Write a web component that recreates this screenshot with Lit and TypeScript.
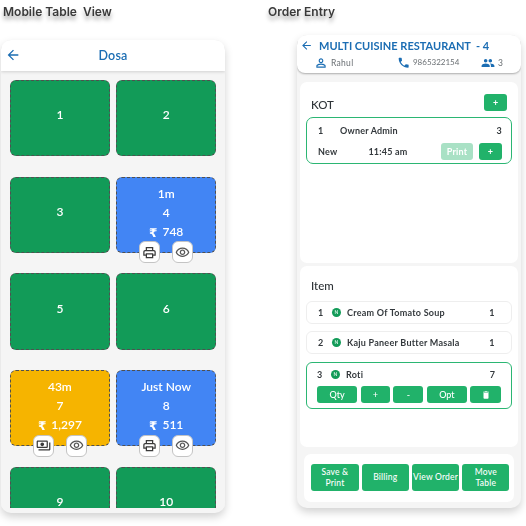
import { LitElement, html, css, svg } from "lit";
import { customElement } from "lit/decorators.js";

const P = {
  back: "M20 11H7.83l5.59-5.59L12 4l-8 8 8 8 1.41-1.41L7.83 13H20v-2z",
  print: "M19 8h-1V3H6v5H5c-1.66 0-3 1.34-3 3v6h4v4h12v-4h4v-6c0-1.66-1.34-3-3-3zM8 5h8v3H8V5zm8 12v2H8v-4h8v2zm2-2v-2H6v2H4v-4c0-.55.45-1 1-1h14c.55 0 1 .45 1 1v4h-2z",
  eye: "M12 6c3.79 0 7.17 2.13 8.82 5.5C19.17 14.87 15.79 17 12 17s-7.17-2.13-8.82-5.5C4.83 8.13 8.21 6 12 6m0-2C7 4 2.73 7.11 1 11.5 2.73 15.89 7 19 12 19s9.27-3.11 11-7.5C21.27 7.11 17 4 12 4zm0 5c1.38 0 2.5 1.12 2.5 2.5S13.38 14 12 14s-2.5-1.12-2.5-2.5S10.62 9 12 9m0-2c-2.48 0-4.5 2.02-4.5 4.5S9.52 16 12 16s4.5-2.02 4.5-4.5S14.48 7 12 7z",
  pay: "M19 14V6c0-1.1-.9-2-2-2H3c-1.1 0-2 .9-2 2v8c0 1.1.9 2 2 2h14c1.1 0 2-.9 2-2zm-2 0H3V6h14v8zm-7-7c-1.66 0-3 1.34-3 3s1.34 3 3 3 3-1.34 3-3-1.34-3-3-3zm13 0v11c0 1.1-.9 2-2 2H4v-2h17V7h2z",
  person: "M12 5.9a2.1 2.1 0 1 1 0 4.2 2.1 2.1 0 0 1 0-4.2m0 9c2.97 0 6.1 1.46 6.1 2.1v1.1H5.9V17c0-.64 3.13-2.1 6.1-2.1M12 4C9.79 4 8 5.79 8 8s1.79 4 4 4 4-1.79 4-4-1.79-4-4-4zm0 9c-2.67 0-8 1.34-8 4v3h16v-3c0-2.66-5.33-4-8-4z",
  call: "M6.62 10.79c1.44 2.83 3.76 5.14 6.59 6.59l2.2-2.2c.27-.27.67-.36 1.02-.24 1.12.37 2.33.57 3.57.57.55 0 1 .45 1 1V20c0 .55-.45 1-1 1-9.39 0-17-7.61-17-17 0-.55.45-1 1-1h3.5c.55 0 1 .45 1 1 0 1.25.2 2.45.57 3.57.11.35.03.74-.25 1.02l-2.2 2.2z",
  group: "M16 11c1.66 0 2.99-1.34 2.99-3S17.66 5 16 5c-1.66 0-3 1.34-3 3s1.34 3 3 3zm-8 0c1.66 0 2.99-1.34 2.99-3S9.66 5 8 5C6.34 5 5 6.34 5 8s1.34 3 3 3zm0 2c-2.33 0-7 1.17-7 3.5V19h14v-2.5c0-2.33-4.67-3.5-7-3.5zm8 0c-.29 0-.62.02-.97.05 1.16.84 1.97 1.97 1.97 3.45V19h6v-2.5c0-2.33-4.67-3.5-7-3.5z",
  del: "M6 19c0 1.1.9 2 2 2h8c1.1 0 2-.9 2-2V7H6v12zM19 4h-3.5l-1-1h-5l-1 1H5v2h14V4z",
};
const icon = (d: string, size: number) =>
  html`<svg width=${size} height=${size} viewBox="0 0 24 24" fill="currentColor">${svg`<path d=${d}></path>`}</svg>`;

type Tile = { n: number; color: string; time?: string; amount?: string; first?: string };
const tiles: Tile[] = [
  { n: 1, color: "g" }, { n: 2, color: "g" }, { n: 3, color: "g" },
  { n: 4, color: "b", time: "1m", amount: "748", first: P.print },
  { n: 5, color: "g" }, { n: 6, color: "g" },
  { n: 7, color: "y", time: "43m", amount: "1,297", first: P.pay },
  { n: 8, color: "b", time: "Just Now", amount: "511", first: P.print },
  { n: 9, color: "g" }, { n: 10, color: "g" },
];
const items = [
  { n: 1, name: "Cream Of Tomato Soup", q: 1 },
  { n: 2, name: "Kaju Paneer Butter Masala", q: 1 },
];

@customElement("app-root")
export class AppRoot extends LitElement {
  static styles = css`
    :host { display: block; width: 526px; height: 526px; overflow: hidden; background: #fff;
      font-family: "Lato", "Open Sans", sans-serif; color: #2f3438; }
    * { box-sizing: border-box; }
    .page { display: grid; grid-template-columns: 263px 263px; filter: blur(.3px); }
    .title { font-family: "Inter", sans-serif; font-weight: 600; font-size: 12px; line-height: 14px; height: 14px;
      color: #3a3a3a; text-shadow: 0 4px 4px rgba(0,0,0,.35); white-space: pre; }
    .left .title { margin: 5px 0 0 3px; }
    .right .title { margin: 5px 0 0 5px; }
    .phone { background: #f5f5f5; border-radius: 10px; box-shadow: 0 4px 8px rgba(0,0,0,.18); overflow: hidden; height: 473px; }
    .left .phone { width: 224px; margin: 21px 0 0 1px; }
    .right .phone { width: 224px; margin: 16px 0 0 34px; display: flex; flex-direction: column; }

    .lhead { height: 31px; background: #fff; display: flex; align-items: center; justify-content: center; position: relative;
      box-shadow: 0 1px 3px rgba(0,0,0,.15); color: #1b6db3; font-size: 12.5px; font-weight: 600; letter-spacing: .2px; }
    .lhead svg { position: absolute; left: 4px; top: 7px; }
    .gridwrap { height: 437px; overflow: hidden; padding: 9px 0 0 9px; background: #f5f5f5; }
    .grid { display: grid; grid-template-columns: 99.8px 99.8px; column-gap: 6.5px; grid-auto-rows: 76.3px; row-gap: 20.4px; }
    .tile { position: relative; border: 1px dashed #505050; border-radius: 6px; color: #fff; font-size: 12px; font-weight: 600;
      display: flex; flex-direction: column; align-items: center; justify-content: center; padding-bottom: 3.5px; line-height: 19px; }
    .tile.plain { padding-bottom: 5.5px; line-height: 12px; }
    .g { background: #129b58; } .b { background: #4285f4; } .y { background: #f6b400; }
    .rs { font-family: "DejaVu Sans", sans-serif; font-size: 12px; font-weight: 700; margin-right: 5px; position: relative; top: 1px; }
    .acts { position: absolute; left: 0; right: 0; bottom: -11.5px; display: flex; justify-content: center; gap: 12px; }
    .act { width: 21px; height: 22px; background: #fff; border: 1px solid #c4c4c4; border-radius: 6px; color: #3b3b3b;
      display: flex; align-items: center; justify-content: center; }
    .act.eye { color: #555; }

    .rhead { height: 38px; background: #fff; border-radius: 0 0 8px 8px; box-shadow: 0 1px 2px rgba(0,0,0,.3); flex: none; }
    .rtitle { display: flex; align-items: center; height: 20px; padding: 0 0 0 3px; color: #1b6db3; font-size: 11px; font-weight: 700; white-space: pre; }
    .rtitle svg { margin-right: 6px; }
    .rsub { display: grid; grid-template-columns: 83.6px 84px 1fr; padding-left: 16.7px; font-size: 8.5px; color: #6a6f73; height: 15px; align-items: center; letter-spacing: .3px; }
    .rsub div { display: flex; align-items: center; }
    .rsub svg { color: #1b6db3; flex: none; }
    .i1 svg { margin-right: 3.3px; } .i2 svg { margin-right: 2.4px; } .i3 svg { margin-right: 2.6px; }
    .phone-num { font-size: 8px; letter-spacing: 0; }
    .rbody { flex: 1; padding: 9px 3px 0; display: flex; flex-direction: column; }
    .card { background: #fff; border-radius: 7px; height: 181px; padding: 0 6px; }
    .card + .card { margin-top: 3px; height: 180.5px; }
    .chead { display: flex; justify-content: space-between; align-items: center; padding: 6px 5px 0; height: 35px; font-size: 11.5px; color: #2f3438; font-weight: 500; }
    .chead span { padding-top: 3px; }
    .btn { background: #21b26a; color: #fff; border-radius: 3px; display: flex; align-items: center; justify-content: center; font-size: 9px; font-weight: 700; }
    .plus { width: 23px; height: 17px; }
    .kot { border: 1.5px solid #2bb673; border-radius: 7px; height: 47px; padding: 0 9px 0 11px; font-size: 9px; font-weight: 700; color: #34393d; letter-spacing: .2px; }
    .kr1 { display: grid; grid-template-columns: 22px 1fr auto; height: 24px; align-items: center; }
    .kr2 { display: flex; align-items: center; height: 18.5px; }
    .kr2 .time { margin-left: 31px; flex: 1; }
    .print { width: 32px; height: 17px; background: #a9e1c5; margin-right: 6px; }
    .ihead { padding: 5px 5px 0; height: 34.5px; font-size: 11.5px; font-weight: 500; display: flex; align-items: center; }
    .row { border: 1px solid #eeeeee; border-radius: 6px; height: 23px; margin-bottom: 7.5px; padding: 0 16.5px 0 11px; font-size: 9px; font-weight: 700; color: #34393d; display: flex; align-items: center; }
    .row.sel { border: 1.5px solid #2bb673; height: 47px; display: block; padding: 0 10px 0 10px; margin: 0; }
    .rowline { display: flex; align-items: center; height: 23.5px; padding-right: 6px; }
    .num { width: 14px; }
    .dot { width: 9px; height: 9px; border-radius: 50%; background: #129b58; color: #d6f0e2; font-size: 5px; line-height: 9px; text-align: center; margin-right: 6px; flex: none; }
    .nm { flex: 1; letter-spacing: .25px; }
    .acts2 { display: grid; grid-template-columns: 40.3px 29.6px 30px 40.3px 30.4px; gap: 3.3px; }
    .acts2 .btn { height: 17.3px; font-weight: 500; font-size: 9px; }
    .bottom { margin: 7px 4px 0; background: #fff; border-radius: 7px; height: 48.6px; padding: 10.6px 5px 0 7.3px; display: grid; grid-template-columns: repeat(4, 47.3px); gap: 3px; }
    .bottom .btn { height: 27px; text-align: center; line-height: 10.5px; font-size: 8.5px; font-weight: 500; white-space: pre-line; letter-spacing: .2px; }
  `;

  tile(t: Tile) {
    return html`<div class="tile ${t.color} ${t.time ? "" : "plain"}">
      ${t.time ? html`<div>${t.time}</div>` : ""}
      <div>${t.n}</div>
      ${t.amount ? html`<div><span class="rs">₹</span>${t.amount}</div>` : ""}
      ${t.first ? html`<div class="acts">
        <div class="act">${icon(t.first, 15)}</div>
        <div class="act eye">${icon(P.eye, 15)}</div>
      </div>` : ""}
    </div>`;
  }

  render() {
    return html`<div class="page">
      <section class="left">
        <div class="title">Mobile Table  View</div>
        <div class="phone">
          <div class="lhead">${icon(P.back, 16)}Dosa</div>
          <div class="gridwrap"><div class="grid">${tiles.map((t) => this.tile(t))}</div></div>
        </div>
      </section>
      <section class="right">
        <div class="title">Order Entry</div>
        <div class="phone">
          <div class="rhead">
            <div class="rtitle">${icon(P.back, 13)}MULTI CUISINE RESTAURANT  - 4</div>
            <div class="rsub">
              <div class="i1">${icon(P.person, 14)}Rahul</div>
              <div class="i2">${icon(P.call, 13.3)}<span class="phone-num">9865322154</span></div>
              <div class="i3">${icon(P.group, 14)}3</div>
            </div>
          </div>
          <div class="rbody">
            <div class="card">
              <div class="chead"><span>KOT</span><div class="btn plus">+</div></div>
              <div class="kot">
                <div class="kr1"><span>1</span><span>Owner Admin</span><span>3</span></div>
                <div class="kr2"><span>New</span><span class="time">11:45 am</span>
                  <div class="btn print">Print</div><div class="btn plus">+</div></div>
              </div>
            </div>
            <div class="card">
              <div class="ihead">Item</div>
              ${items.map((i) => html`<div class="row"><span class="num">${i.n}</span><span class="dot">N</span><span class="nm">${i.name}</span><span>${i.q}</span></div>`)}
              <div class="row sel">
                <div class="rowline"><span class="num">3</span><span class="dot">N</span><span class="nm">Roti</span><span>7</span></div>
                <div class="acts2">
                  <div class="btn">Qty</div><div class="btn">+</div><div class="btn">-</div><div class="btn">Opt</div>
                  <div class="btn">${icon(P.del, 10)}</div>
                </div>
              </div>
            </div>
            <div class="bottom">
              <div class="btn">Save &amp;\nPrint</div><div class="btn">Billing</div><div class="btn">View Order</div><div class="btn">Move\nTable</div>
            </div>
          </div>
        </div>
      </section>
    </div>`;
  }
}
